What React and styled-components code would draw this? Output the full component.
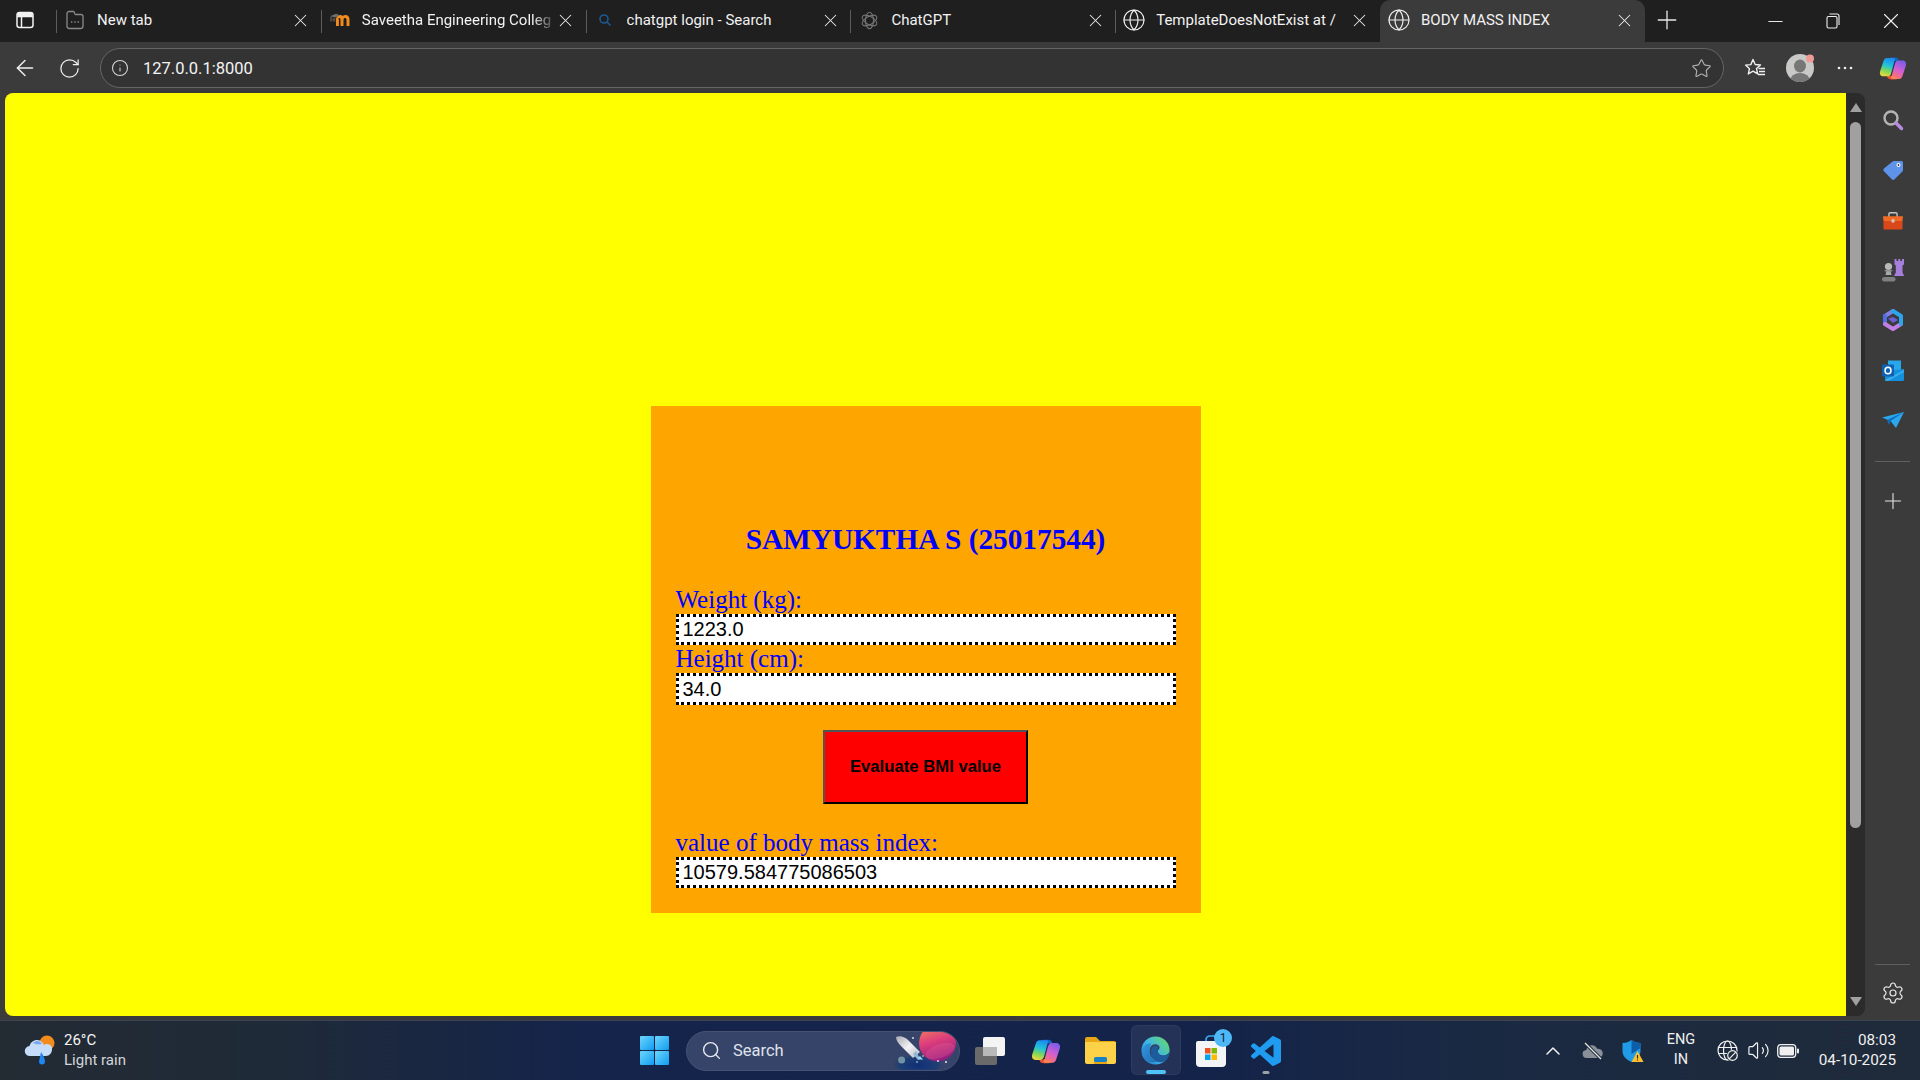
import React from "react";
import styled, { createGlobalStyle } from "styled-components";
import { X, Plus, Minus, ArrowLeft, RotateCw, Info, Star, Globe, Search, Settings, ChevronUp, Volume2 } from "lucide-react";

const Global = createGlobalStyle`
  html, body { margin: 0; padding: 0; background: #3b3b3b; overflow: hidden; }
  * { box-sizing: border-box; }
  svg { flex: none; }
`;

const UI = `"Roboto", "Noto Sans", sans-serif`;

const Screen = styled.div`
  width: 1920px; height: 1080px; display: flex; flex-direction: column;
  background: #3b3b3b; overflow: hidden; font-family: ${UI}; color: #fff;
`;

/* ---------- tab strip ---------- */
const TabStrip = styled.div`
  height: 42px; flex: none; display: flex; align-items: stretch; background: #1f1f1f;
`;
const PaneToggle = styled.div`
  width: 56px; flex: none; display: flex; align-items: center; padding-left: 16px; padding-bottom: 2px;
`;
const Tab = styled.div`
  position: relative; width: 264.8px; flex: none; display: flex; align-items: center;
  padding: 0 9px 2px 9px; font-size: 15px;
  background: ${p => (p.$active ? "#3b3b3b" : "transparent")};
  border-radius: ${p => (p.$active ? "10px 10px 0 0" : "0")};
  &::before {
    content: ""; position: absolute; left: 0; top: 10px; bottom: 9px; width: 1px;
    background: ${p => (p.$active ? "transparent" : "#5c5c5c")};
  }
`;
const FavSlot = styled.span`
  width: 20px; height: 20px; flex: none; display: flex; align-items: center; justify-content: center;
  margin-right: 12px;
`;
const TabTitle = styled.span`
  flex: 1; min-width: 0; white-space: nowrap; overflow: hidden; color: #f2f2f2; margin-right: 4px;
  ${p => p.$fade && "mask-image: linear-gradient(90deg, #000 90%, rgba(0,0,0,.25) 100%);"}
`;
const TabClose = styled.span`
  width: 22px; flex: none; display: flex; justify-content: center; color: #ececec;
`;
const NewTabButton = styled.div`
  width: 44px; display: flex; align-items: center; justify-content: center; color: #e8e8e8; padding-bottom: 2px;
`;
const Grow = styled.div` flex: 1; `;
const WinButton = styled.div`
  width: 58px; flex: none; display: flex; align-items: center; justify-content: center; color: #f0f0f0;
`;

/* ---------- toolbar ---------- */
const Toolbar = styled.div`
  height: 51px; flex: none; display: flex; align-items: flex-start; padding: 6px 0 0 2px; background: #3b3b3b;
`;
const ToolButton = styled.div`
  width: ${p => p.$w || 45}px; height: 40px; flex: none; display: flex; align-items: center; justify-content: center;
  color: #f0f0f0;
`;
const AddressBar = styled.div`
  width: 1624px; height: 40px; flex: none; margin: 0 8px; display: flex; align-items: center;
  padding: 0 11px 0 10px; border: 1px solid #666; border-radius: 20px; background: #333;
`;
const UrlText = styled.span`
  margin-left: 14px; flex: 1; font-size: 16.5px; color: #f4f4f4;
`;

/* ---------- main area ---------- */
const Main = styled.div`
  height: 923px; flex: none; display: flex;
`;
const Page = styled.main`
  width: 1841px; margin-left: 5px; background: #ffff00; border-radius: 8px 0 0 8px;
  display: flex; justify-content: center; align-items: flex-start; padding-top: 313px;
`;
const Card = styled.form`
  width: 550px; height: 507px; background: #ffa500; padding: 25px; display: flex; flex-direction: column;
  font-family: "Liberation Serif", serif;
`;
const Heading = styled.h2`
  margin: 92px 0 30px; height: 33px; line-height: 33px; font-size: 29.3px; font-weight: 700;
  text-align: center; color: #0000ff;
`;
const FieldLabel = styled.label`
  display: block; height: 28px; line-height: 28px; font-size: 25px; color: #0000ff; white-space: nowrap;
`;
const Field = styled.input`
  display: block; width: 500px; height: ${p => p.$h || 31}px; flex: none; margin: 0; padding: 0 4px;
  border: 3px dotted #000; background: #fff; color: #000; outline: none; border-radius: 0;
  font-family: "Liberation Sans", sans-serif; font-size: 20px;
`;
const SubmitButton = styled.button`
  width: 205px; height: 74px; flex: none; align-self: center; margin: 25px 0 25px; padding: 0;
  background: #ff0000; border: 2px outset #000; color: #000; border-radius: 0;
  font-family: "Liberation Sans", sans-serif; font-size: 16.7px; font-weight: 700;
`;

const ScrollTrack = styled.div`
  width: 19px; flex: none; background: #2b2b2b; border-radius: 0 8px 8px 0;
  display: flex; flex-direction: column; align-items: center; padding: 10px 0 10px;
`;
const Arrow = styled.div`
  width: 0; height: 0; flex: none;
  border-left: 6.5px solid transparent; border-right: 6.5px solid transparent;
  ${p => (p.$down ? "border-top: 9px solid #a0a0a0; margin-top: auto;" : "border-bottom: 9px solid #a0a0a0;")}
`;
const Thumb = styled.div`
  width: 11px; height: 706px; flex: none; margin-top: 10px; background: #a0a0a0; border-radius: 6px;
`;
const SideRail = styled.aside`
  width: 55px; flex: none; display: flex; flex-direction: column; align-items: center; padding-top: 2px;
`;
const RailSlot = styled.div`
  width: 55px; height: 50px; flex: none; display: flex; align-items: center; justify-content: center; color: #e8e8e8;
`;
const GearSlot = styled(RailSlot)`
  height: 51px; padding-top: 5px;
`;
const RailDivider = styled.div`
  width: 35px; height: 1px; flex: none; background: #606060;
  margin-top: ${p => p.$mt || 0}px; margin-bottom: ${p => p.$mb || 0}px;
`;
const RailFoot = styled.div`
  margin-top: auto; display: flex; flex-direction: column; align-items: center;
`;

/* ---------- taskbar ---------- */
const Taskbar = styled.footer`
  height: 60px; flex: none; margin-top: 4px; display: flex; align-items: stretch;
  border-top: 1px solid #3c4452;
  background: linear-gradient(90deg, #232b33 0%, #1f2a38 14%, #15244a 30%, #13234a 62%, #1a2943 76%, #1f2b3a 100%);
`;
const Weather = styled.div`
  width: 627px; flex: none; display: flex; align-items: center; padding-left: 24px;
`;
const WeatherText = styled.div`
  margin-left: 8px; padding-bottom: 2px; font-size: 15px; line-height: 20px; color: #f4f4f4;
  & > div:last-child { color: #d4d6da; }
`;
const TaskSlot = styled.div`
  position: relative; width: 55px; flex: none; display: flex; align-items: center; justify-content: center;
`;
const ActiveBox = styled.div`
  position: absolute; left: 3px; top: 4px; width: 50px; height: 50px; border-radius: 6px;
  background: rgba(255,255,255,.07); border: 1px solid rgba(255,255,255,.04);
`;
const RunDot = styled.div`
  position: absolute; bottom: 6px; left: 50%; transform: translateX(-50%); border-radius: 2px;
  height: ${p => (p.$wide ? 4 : 3)}px;
  width: ${p => (p.$wide ? 20 : 7)}px; background: ${p => (p.$wide ? "#4fc3f7" : "#9aa0a8")};
`;
const Badge = styled.span`
  position: absolute; left: 31px; top: 8px; width: 18px; height: 18px; border-radius: 50%;
  background: #4db8f5; color: #10233f; font-size: 12px; line-height: 18px; text-align: center;
`;
const SearchPill = styled.div`
  position: relative; width: 274px; height: 40px; flex: none; align-self: center; margin: 0 3px 0 4px;
  display: flex; align-items: center; padding-left: 14px; overflow: hidden; border-radius: 20px;
  background: #37446a; border: 1px solid #465274;
`;
const SearchLabel = styled.span`
  margin-left: 11px; font-size: 16.5px; color: #dfe2ea;
`;
const PillArt = styled.span`
  position: absolute; right: 3px; top: -1px; display: block; line-height: 0;
`;
const Tray = styled.div`
  width: 387px; margin-left: auto; flex: none; display: flex; align-items: center;
`;
const TraySlot = styled.div`
  width: ${p => p.$w || 40}px; flex: none; display: flex; align-items: center; justify-content: center; color: #f0f0f0;
`;
const LangBox = styled.div`
  width: 56px; margin-right: 4px; flex: none; padding-bottom: 2px; text-align: center; font-size: 14.5px; line-height: 20px; color: #f0f0f0;
`;
const Clock = styled.div`
  margin-left: auto; padding: 0 24px 2px 0; text-align: right; font-size: 15.3px; line-height: 20px; color: #f0f0f0;
`;

/* ---------- drawn icons ---------- */
const PaneIcon = () => (
  <svg width="18" height="18" viewBox="0 0 18 18" fill="none" stroke="#f2f2f2" strokeWidth="1.5">
    <rect x="1" y="1.5" width="16" height="15" rx="2.5" />
    <path d="M1 5.5h16M5.5 5.5v11" />
    <rect x="1.5" y="2" width="15" height="3.5" fill="#f2f2f2" stroke="none" />
  </svg>
);
const NewTabFav = () => (
  <svg width="18" height="20" viewBox="0 0 18 20" fill="none" stroke="#8a8a8a" strokeWidth="1.3">
    <path d="M3 1.5h4.5c1 0 1 3 2 3H15a2 2 0 0 1 2 2V16a2.5 2.5 0 0 1-2.5 2.5h-11A2.5 2.5 0 0 1 1 16V3.5a2 2 0 0 1 2-2z" />
    <path d="M5 12h1.4M8.3 12h1.4M11.6 12h1.4" strokeWidth="1.6" />
  </svg>
);
const MoodleFav = () => (
  <svg width="20" height="14" viewBox="0 0 20 14">
    <path d="M6 13V6.5c0-3 2-4.5 4-4.5 1 0 2 .3 2.6 1C13.5 2.3 14.600 2 15.500 2 18 2 19.500 3.500 19.500 6.500V13h-3V7c0-1.400-.5-2-1.500-2s-1.500.6-1.500 2v6h-3V7c0-1.400-.5-2-1.500-2S8.900 5.600 8.900 7v6z" fill="#f28a1e" />
    <path d="M0 3.200 6 .8l4 1.400-5 2.200z" fill="#6e6e6e" />
    <path d="M1 4v4.500" stroke="#6e6e6e" strokeWidth="1" />
    <path d="M2.500 5v3c1 .8 2 .8 3 .3V5.200z" fill="#5a4a3a" />
  </svg>
);
const BingFav = () => (
  <svg width="14" height="14" viewBox="0 0 14 14" fill="none" stroke="#1c5a94" strokeWidth="1.6">
    <circle cx="6" cy="6" r="4" />
    <path d="M9 9l3.500 3.500" />
  </svg>
);
const GptFav = () => (
  <svg width="19" height="19" viewBox="0 0 20 20" fill="none" stroke="#777" strokeWidth="1.1">
    <ellipse cx="10" cy="10" rx="4.200" ry="8.600" />
    <ellipse cx="10" cy="10" rx="4.200" ry="8.600" transform="rotate(60 10 10)" />
    <ellipse cx="10" cy="10" rx="4.200" ry="8.600" transform="rotate(120 10 10)" />
  </svg>
);
const RestoreIcon = () => (
  <svg width="14" height="16" viewBox="0 0 14 16" fill="none" stroke="#f0f0f0" strokeWidth="1.1">
    <rect x="1" y="3.500" width="10" height="11.500" rx="1.500" />
    <path d="M3.500 1h7.500a2 2 0 0 1 2 2v9" />
  </svg>
);
const FavStarIcon = () => (
  <svg width="22" height="22" viewBox="0 0 22 22" fill="none" stroke="#f0f0f0" strokeWidth="1.4" strokeLinejoin="round">
    <path d="M9 2.500l2.200 5 5.300.5-4 3.600 1.200 5.300L9 14.200 4.300 17l1.200-5.300-4-3.600 5.300-.5z" />
    <path d="M14.500 11.500H21M15 14.500h6M14 17.500h7" />
  </svg>
);
const Avatar = () => (
  <svg width="28" height="28" viewBox="0 0 28 28">
    <defs><clipPath id="av"><ellipse cx="14" cy="14" rx="14" ry="14" /></clipPath></defs>
    <circle cx="14" cy="14" r="14" fill="#c9c9c7" />
    <g clipPath="url(#av)" fill="#777">
      <ellipse cx="14" cy="12" rx="6" ry="6.500" />
      <ellipse cx="14" cy="27" rx="10" ry="8" />
    </g>
    <circle cx="24" cy="4.500" r="4" fill="#f09a96" />
  </svg>
);
const CopilotLogo = ({ size = 28, id = "cp" }) => (
  <svg width={size} height={size} viewBox="0 0 32 32">
    <defs>
      <linearGradient id={`${id}a`} x1="0.55" y1="0" x2="0.3" y2="1">
        <stop offset="0" stopColor="#1d8df0" /><stop offset=".4" stopColor="#22c3d8" />
        <stop offset=".7" stopColor="#7fd85a" /><stop offset="1" stopColor="#f2d83a" />
      </linearGradient>
      <linearGradient id={`${id}b`} x1="0.7" y1="0" x2="0.3" y2="1">
        <stop offset="0" stopColor="#7a5ce8" /><stop offset=".5" stopColor="#d05fd4" />
        <stop offset=".85" stopColor="#f56c86" /><stop offset="1" stopColor="#f78a4a" />
      </linearGradient>
    </defs>
    <path d="M23 8c-.5-2.500-2-4-4.500-4h-5c-1.500 0-2.500.8-3 2L14 9z" fill="#1262c8" />
    <path d="M9 25.500c.5 2.300 2 3.500 4.500 3.500h5.500c1.500 0 2.500-.8 3-2l-4-3z" fill="#ee4d3c" />
    <path d="M9 4.500h7.500c1.500 0 2.300 1 1.900 2.500L14.500 21c-.8 2.800-2.500 4.500-5 4.500H5c-3.200 0-4.500-2.500-3.800-5.500L5 8.500C5.800 5.800 7 4.500 9 4.500z" fill={`url(#${id}a)`} />
    <path d="M23 28.500h-7.500c-1.500 0-2.300-1-1.900-2.500L17.500 12c.8-2.800 2.500-4.500 5-4.500H27c3.200 0 4.500 2.500 3.800 5.500L27 24.500c-.8 2.700-2 4-4 4z" fill={`url(#${id}b)`} />
    <path d="M18.500 7.500L13.800 25" stroke="#1c2a48" strokeWidth="1.400" opacity=".75" />
  </svg>
);
const RailSearch = () => (
  <svg width="22" height="22" viewBox="0 0 22 22" fill="none">
    <circle cx="9" cy="9" r="6.500" stroke="#b4b4b4" strokeWidth="2.400" />
    <path d="M14 14l5.500 5.500" stroke="#b78be0" strokeWidth="3.400" strokeLinecap="round" />
  </svg>
);
const RailTag = () => (
  <svg width="22" height="22" viewBox="0 0 22 22">
    <path d="M12 2h7.500A1.500 1.500 0 0 1 21 3.500V11a2 2 0 0 1-.6 1.400l-7.800 7.800a2 2 0 0 1-2.800 0l-7.900-7.900a2 2 0 0 1 0-2.800L10.600 2.600A2 2 0 0 1 12 2z" fill="#5f93ea" />
    <circle cx="16.500" cy="6" r="2" fill="#fff" /><circle cx="16.500" cy="6" r=".9" fill="#333" />
  </svg>
);
const RailToolbox = () => (
  <svg width="22" height="20" viewBox="0 -2 24 22">
    <path d="M7.500 6V2.500A1.500 1.500 0 0 1 9 1h6a1.500 1.500 0 0 1 1.500 1.500V6" fill="none" stroke="#c4c4c4" strokeWidth="1.500" />
    <path d="M1 5h22l-.6 5H1.600z" fill="#f26a24" />
    <path d="M1.500 10h21v8a1.500 1.500 0 0 1-1.500 1.500H3A1.500 1.500 0 0 1 1.500 18z" fill="#d9481a" />
    <circle cx="12" cy="10" r="2" fill="#d0c4bc" />
  </svg>
);
const RailChess = () => (
  <svg width="24" height="24" viewBox="0 0 24 24">
    <path d="M13.500 1h2v2h1.800V1h2v2H21V1h2v5.500l-1.500 1v7l1.700 3.500H13l1.800-3.500v-7L13.500 6.500z" fill="#a67fdc" />
    <circle cx="7.500" cy="8.500" r="3.600" fill="#b8b8b8" />
    <path d="M5.500 12h4l1 5h-6z" fill="#a8a8a8" />
    <rect x="3.500" y="12" width="8" height="1.400" rx=".7" fill="#8c8c8c" />
    <rect x="1" y="19" width="13.500" height="4.500" rx="2.200" fill="#808080" />
  </svg>
);
const M365 = () => (
  <svg width="22" height="22" viewBox="0 0 22 22" fill="none" strokeLinejoin="round" strokeLinecap="round">
    <path d="M3 7l8-5" stroke="#7d7de4" strokeWidth="4" />
    <path d="M3 7v8" stroke="#4f6ee0" strokeWidth="4" />
    <path d="M3 15l8 5 8-5" stroke="#c080e6" strokeWidth="4" />
    <path d="M11 2l8 5v8" stroke="#2ba6ea" strokeWidth="4" />
    <path d="M6 9.500l5-1.500 5 3-5 3z" fill="#6a5fd8" />
  </svg>
);
const Outlook = () => (
  <svg width="22" height="21" viewBox="0 0 22 21">
    <rect x="6" y="0.500" width="13" height="11" fill="#28a8ea" />
    <path d="M3 11l19-2v10.500a1.500 1.500 0 0 1-1.500 1.500H4.500A1.500 1.500 0 0 1 3 19.500z" fill="#1490df" />
    <path d="M3 20l19-10v2L6 21H4z" fill="#50c5f2" opacity=".6" />
    <rect x="0" y="4.500" width="12" height="12" rx="1.300" fill="#0d62b4" />
    <ellipse cx="6" cy="10.500" rx="3" ry="3.300" fill="none" stroke="#fff" strokeWidth="1.500" />
  </svg>
);
const SendIcon = () => (
  <svg width="22" height="16" viewBox="0 0 22 16">
    <path d="M0 5.500L22 0 14 16 8.500 9z" fill="#2ba7ee" />
    <path d="M5 8l17-8-13.500 9L7 13z" fill="#0f6cbd" />
  </svg>
);
const WeatherIcon = () => (
  <svg width="32" height="31" viewBox="0 0 32 31">
    <circle cx="23" cy="8" r="7.500" fill="#f28a1c" />
    <path d="M6 21a5 5 0 0 1-.5-10c1-3.500 4-6 7.500-6 3.200 0 6 2 7 5a5 5 0 0 1 8 4.500c0 3.500-2.500 6.500-6 6.500z" fill="#c5dcfa" />
    <path d="M9 8c1-1 2.500-2 4-2 2 0 4 1 5 3-3 0-6 1-9-1z" fill="#7ea6ee" />
    <path d="M17 17c2 3 4 6.500 4 9.500a3 3 0 0 1-6 0z" fill="#1e86f0" />
  </svg>
);
const WinLogo = () => (
  <svg width="29" height="29" viewBox="0 0 29 29">
    <defs><linearGradient id="winGrad" x1="0" y1="0" x2="1" y2="1"><stop offset="0" stopColor="#6ed6fb" /><stop offset="1" stopColor="#0f9cf3" /></linearGradient></defs>
    <rect x="0" y="0" width="14" height="14" rx="1" fill="url(#winGrad)" />
    <rect x="15" y="0" width="14" height="14" rx="1" fill="url(#winGrad)" />
    <rect x="0" y="15" width="14" height="14" rx="1" fill="url(#winGrad)" />
    <rect x="15" y="15" width="14" height="14" rx="1" fill="url(#winGrad)" />
  </svg>
);
const PillDrawing = () => (
  <svg width="62" height="40" viewBox="0 0 62 40">
    <defs>
      <linearGradient id="pl" x1="0.3" y1="0" x2="0.6" y2="1"><stop offset="0" stopColor="#f2805a" /><stop offset=".45" stopColor="#dc3d7c" /><stop offset="1" stopColor="#8f1a80" /></linearGradient>
      <radialGradient id="nb"><stop offset="0" stopColor="#0e2f78" /><stop offset=".7" stopColor="#163a78" stopOpacity=".7" /><stop offset="1" stopColor="#37446a" stopOpacity="0" /></radialGradient>
      <linearGradient id="rk" x1="0" y1="0" x2="1" y2="1"><stop offset="0" stopColor="#a8a8b0" /><stop offset=".5" stopColor="#f2f2f6" /><stop offset="1" stopColor="#b4b8c2" /></linearGradient>
    </defs>
    <ellipse cx="24" cy="34" rx="28" ry="11" fill="url(#nb)" />
    <circle cx="43.500" cy="12" r="18.500" fill="url(#pl)" />
    <ellipse cx="46" cy="20" rx="15" ry="7" fill="#f06a9a" opacity=".25" transform="rotate(-20 46 20)" />
    <path d="M2 6c4-1.500 8-.5 12 3l12 12-7 6L7 15C4 12 2 9 2 6z" fill="url(#rk)" />
    <path d="M19 23l3-3 3 6 4 2-5 1z" fill="#8fb8d8" />
    <path d="M24 27l5 2-3-4z" fill="#9fe0fb" />
    <circle cx="7.600" cy="29" r="3.500" fill="#6f93a0" />
    <circle cx="19" cy="7" r=".9" fill="#e8eaf0" /><circle cx="29" cy="25" r=".8" fill="#e8eaf0" />
    <circle cx="44" cy="30" r=".9" fill="#e8eaf0" /><circle cx="52" cy="31" r="1" fill="#e8eaf0" />
    <circle cx="23" cy="31" r=".8" fill="#e8eaf0" />
  </svg>
);
const TaskView = () => (
  <svg width="31" height="28" viewBox="0 0 31 28">
    <rect x="0" y="10" width="22" height="18" rx="2" fill="#6a6a6a" />
    <rect x="8" y="0" width="22" height="19" rx="2" fill="#f4f4f4" />
    <rect x="8" y="10" width="14" height="9" fill="#b9b9b9" />
  </svg>
);
const Explorer = () => (
  <svg width="31" height="27" viewBox="0 0 31 27">
    <path d="M0 2a2 2 0 0 1 2-2h9l4 4h14a2 2 0 0 1 2 2v4H0z" fill="#e8a715" />
    <path d="M0 5h31v20a2 2 0 0 1-2 2H2a2 2 0 0 1-2-2z" fill="#fdd148" />
    <rect x="9" y="20" width="13" height="5" rx="1.500" fill="#1681c9" />
    <rect x="9" y="25" width="13" height="2" fill="#e8a715" />
  </svg>
);
const EdgeLogo = () => (
  <svg width="29" height="29" viewBox="0 0 32 32">
    <defs>
      <linearGradient id="e1" x1="0" y1="1" x2="1" y2="0.2"><stop offset="0" stopColor="#0c6cc4" /><stop offset=".5" stopColor="#2fb0e8" /><stop offset="1" stopColor="#58d467" /></linearGradient>
      <linearGradient id="e2" x1="0" y1="0" x2="1" y2="1"><stop offset="0" stopColor="#2190de" /><stop offset="1" stopColor="#1163ae" /></linearGradient>
    </defs>
    <circle cx="16" cy="16" r="15.500" fill="url(#e1)" />
    <path d="M31.500 17c-.5 2-3 4.500-7 4.500-5 0-6-3-6-5.500 1.500-1 3-3 1-5.500-3.500-3-9-1-10 4-1 5 2 11 8 13 3 1 6 .6 8 0 3-1.500 5-4.500 6-10.500z" fill="#24335a" />
    <path d="M9.500 14.500C8.500 20 12 26.500 17.500 28c-5 2-11 1-14-3-3-4-3-8-1-12 2-4 6-5 9-4.500-1.500 1.500-2 3.500-2 6z" fill="url(#e2)" />
    <path d="M18.500 16c0 3 2 5.500 6 5.500 3 0 5.500-1.500 7-4.500-.5 6-3 10-6.500 11.500-5 1.500-9.500-.5-12-4-2.500-3.500-3-9-1-11.500 2-2 5-2.500 7-1-1 1-.5 2.500-.5 4z" fill="#0d4f96" />
  </svg>
);
const StoreIcon = () => (
  <svg width="30" height="32" viewBox="0 0 30 32">
    <path d="M10 7V4a4 4 0 0 1 4-3h6" fill="none" stroke="#3ca8ee" strokeWidth="1.600" />
    <path d="M2 6h26a2 2 0 0 1 2 2v20a4 4 0 0 1-4 4H4a4 4 0 0 1-4-4V8a2 2 0 0 1 2-2z" fill="#f2f4f6" />
    <rect x="9" y="13" width="5.500" height="5.500" fill="#f25022" /><rect x="15.500" y="13" width="5.500" height="5.500" fill="#7fba00" />
    <rect x="9" y="19.500" width="5.500" height="5.500" fill="#00a4ef" /><rect x="15.500" y="19.500" width="5.500" height="5.500" fill="#ffb900" />
  </svg>
);
const VsCode = () => (
  <svg width="30" height="30" viewBox="0 0 24 24">
    <path fill="#1f9cf0" d="M23.150 2.587L18.210.21a1.494 1.494 0 0 0-1.705.29l-9.460 8.630-4.120-3.128a.999.999 0 0 0-1.276.057L.327 7.261A1 1 0 0 0 .326 8.740L3.899 12 .326 15.260a1 1 0 0 0 .001 1.479L1.650 17.940a.999.999 0 0 0 1.276.057l4.120-3.128 9.460 8.630a1.492 1.492 0 0 0 1.704.29l4.942-2.377A1.500 1.500 0 0 0 24 20.060V3.939a1.500 1.500 0 0 0-.850-1.352zm-5.146 14.861L10.826 12l7.178-5.448v10.896z" />
  </svg>
);
const CloudOff = () => (
  <svg width="22" height="18" viewBox="0 0 22 18">
    <path d="M5 16a4 4 0 0 1-.7-8C5 5 7.500 3 10 3.200c2.500 0 4.400 1.500 5.200 3.600A4.500 4.500 0 0 1 17 16z" fill="#8a9098" />
    <path d="M3 1l16 16" stroke="#1f2b3a" strokeWidth="3.200" />
    <path d="M3 1l16 16" stroke="#e4e4e4" strokeWidth="1.200" />
  </svg>
);
const Shield = () => (
  <svg width="22" height="24" viewBox="0 0 22 24">
    <path d="M9.500 1c2.500 2 5.500 3 9 3v8c0 5-3.500 8.500-9 11C4 20.500.5 17 .5 12V4c3.500 0 6.500-1 9-3z" fill="#1f9be8" />
    <path d="M9.500 1c2.500 2 5.500 3 9 3v5l-9 6z" fill="#0c5ea8" />
    <path d="M15.500 12l6 11h-12z" fill="#fbc02d" />
    <path d="M15.500 16v3.500M15.500 20.500v1" stroke="#222" strokeWidth="1.100" />
  </svg>
);
const GlobeBlocked = () => (
  <svg width="22" height="22" viewBox="0 0 22 22" fill="none" stroke="#f0f0f0" strokeWidth="1.200">
    <circle cx="10.500" cy="10.500" r="9.500" />
    <ellipse cx="10.500" cy="10.500" rx="4" ry="9.500" />
    <path d="M1.500 7.500h18M1.500 13.500h10" />
    <circle cx="15.500" cy="15.500" r="6" fill="#1f2b3a" stroke="none" />
    <circle cx="15.500" cy="15.500" r="4.800" />
    <path d="M12.200 18.800l6.600-6.600" />
  </svg>
);
const Battery = () => (
  <svg width="22" height="14" viewBox="0 0 22 14">
    <rect x=".7" y=".7" width="18" height="12.600" rx="3" fill="none" stroke="#f0f0f0" strokeWidth="1.300" />
    <rect x="2.500" y="2.500" width="14.500" height="9" rx="1.500" fill="#f0f0f0" />
    <rect x="20" y="4.500" width="2" height="5" rx="1" fill="#f0f0f0" />
  </svg>
);

const globe = <Globe size={24} strokeWidth={1.15} color="#f0f0f0" />;
const tabs = [
  { title: "New tab", fav: <NewTabFav /> },
  { title: "Saveetha Engineering Colleg", fav: <MoodleFav />, fade: true },
  { title: "chatgpt login - Search", fav: <BingFav /> },
  { title: "ChatGPT", fav: <GptFav /> },
  { title: "TemplateDoesNotExist at /", fav: globe },
  { title: "BODY MASS INDEX", fav: globe, active: true },
];

const railIcons = [<RailSearch />, <RailTag />, <RailToolbox />, <RailChess />, <M365 />, <Outlook />, <SendIcon />];

export default function App() {
  return (
    <Screen>
      <Global />
      <TabStrip>
        <PaneToggle><PaneIcon /></PaneToggle>
        {tabs.map(t => (
          <Tab key={t.title} $active={t.active}>
            <FavSlot>{t.fav}</FavSlot>
            <TabTitle $fade={t.fade}>{t.title}</TabTitle>
            <TabClose><X size={21} strokeWidth={1.15} /></TabClose>
          </Tab>
        ))}
        <NewTabButton><Plus size={30} strokeWidth={1.05} /></NewTabButton>
        <Grow />
        <WinButton><Minus size={23} strokeWidth={1} /></WinButton>
        <WinButton><RestoreIcon /></WinButton>
        <WinButton><X size={26} strokeWidth={1} /></WinButton>
      </TabStrip>

      <Toolbar>
        <ToolButton><ArrowLeft size={26} strokeWidth={1.3} /></ToolButton>
        <ToolButton><RotateCw size={23} strokeWidth={1.3} /></ToolButton>
        <AddressBar>
          <Info size={18} strokeWidth={1.4} color="#d8d8d8" />
          <UrlText>127.0.0.1:8000</UrlText>
          <Star size={21} strokeWidth={1.3} color="#b0b0b0" />
        </AddressBar>
        <ToolButton><FavStarIcon /></ToolButton>
        <ToolButton><Avatar /></ToolButton>
        <ToolButton>
          <svg width="16" height="4" viewBox="0 0 16 4" fill="#f0f0f0"><circle cx="2" cy="2" r="1.300" /><circle cx="8" cy="2" r="1.300" /><circle cx="14" cy="2" r="1.300" /></svg>
        </ToolButton>
        <ToolButton $w={51}><CopilotLogo id="cpa" /></ToolButton>
      </Toolbar>

      <Main>
        <Page>
          <Card onSubmit={e => e.preventDefault()}>
            <Heading>SAMYUKTHA S (25017544)</Heading>
            <FieldLabel htmlFor="weight">Weight (kg):</FieldLabel>
            <Field id="weight" readOnly value="1223.0" />
            <FieldLabel htmlFor="height">Height (cm):</FieldLabel>
            <Field id="height" $h={32} readOnly value="34.0" />
            <SubmitButton type="button">Evaluate BMI value</SubmitButton>
            <FieldLabel htmlFor="bmi">value of body mass index:</FieldLabel>
            <Field id="bmi" readOnly value="10579.584775086503" />
          </Card>
        </Page>
        <ScrollTrack>
          <Arrow />
          <Thumb />
          <Arrow $down />
        </ScrollTrack>
        <SideRail>
          {railIcons.map((ic, i) => <RailSlot key={i}>{ic}</RailSlot>)}
          <RailDivider $mt={16} $mb={14} />
          <RailSlot><Plus size={26} strokeWidth={1} /></RailSlot>
          <RailFoot>
            <RailDivider />
            <GearSlot><Settings size={24} strokeWidth={1.2} /></GearSlot>
          </RailFoot>
        </SideRail>
      </Main>

      <Taskbar>
        <Weather>
          <WeatherIcon />
          <WeatherText><div>26°C</div><div>Light rain</div></WeatherText>
        </Weather>
        <TaskSlot><WinLogo /></TaskSlot>
        <SearchPill>
          <Search size={21} strokeWidth={1.6} color="#e6e8ee" />
          <SearchLabel>Search</SearchLabel>
          <PillArt><PillDrawing /></PillArt>
        </SearchPill>
        <TaskSlot><TaskView /></TaskSlot>
        <TaskSlot><CopilotLogo id="cpb" size={30} /></TaskSlot>
        <TaskSlot><Explorer /></TaskSlot>
        <TaskSlot><ActiveBox /><EdgeLogo /><RunDot $wide /></TaskSlot>
        <TaskSlot><StoreIcon /><Badge>1</Badge></TaskSlot>
        <TaskSlot><VsCode /><RunDot /></TaskSlot>
        <Tray>
          <TraySlot><ChevronUp size={24} strokeWidth={1.5} /></TraySlot>
          <TraySlot><CloudOff /></TraySlot>
          <TraySlot><Shield /></TraySlot>
          <LangBox><div>ENG</div><div>IN</div></LangBox>
          <TraySlot $w={30}><GlobeBlocked /></TraySlot>
          <TraySlot $w={30}><Volume2 size={23} strokeWidth={1.25} /></TraySlot>
          <TraySlot $w={30}><Battery /></TraySlot>
          <Clock><div>08:03</div><div>04-10-2025</div></Clock>
        </Tray>
      </Taskbar>
    </Screen>
  );
}
